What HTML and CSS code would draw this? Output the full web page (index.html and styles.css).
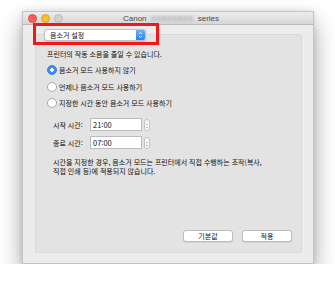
FILE: index.html
```html
<!DOCTYPE html>
<html lang="ko">
<head>
    <meta charset="UTF-8">
    <meta name="viewport" content="width=device-width, initial-scale=1.0">
    <title>Canon series</title>
    <link rel="stylesheet" href="styles.css">
</head>
<body>
    <div class="window">
        <div class="titlebar">
            <div class="lights">
                <span class="light red"></span>
                <span class="light yellow"></span>
                <span class="light gray"></span>
            </div>
            <div class="title">Canon <span class="blur">XXXXXXXX</span> series</div>
        </div>
        <div class="content">
            <div class="popup">
                <span class="popup-text">음소거 설정</span>
                <span class="popup-btn">
                    <svg width="5" height="8" viewBox="0 0 5 8"><path d="M1 3 L2.5 1.5 L4 3 M1 5 L2.5 6.5 L4 5" fill="none" stroke="#fff" stroke-width="0.9"/></svg>
                </span>
            </div>
            <div class="panel">
                <div class="intro">프린터의 작동 소음을 줄일 수 있습니다.</div>
                <div class="radios">
                    <div class="radio-row"><span class="radio on"></span>음소거 모드 사용하지 않기</div>
                    <div class="radio-row"><span class="radio"></span>언제나 음소거 모드 사용하기</div>
                    <div class="radio-row"><span class="radio"></span>지정한 시간 동안 음소거 모드 사용하기</div>
                </div>
                <div class="times">
                    <div class="time-row">
                        <span class="time-label">시작 시간:</span>
                        <span class="field">21:00</span>
                        <span class="stepper"><svg width="6" height="12" viewBox="0 0 6 12"><path d="M1.5 4.5 L3 3 L4.5 4.5 M1.5 7.5 L3 9 L4.5 7.5" fill="none" stroke="#888" stroke-width="0.8"/></svg></span>
                    </div>
                    <div class="time-row">
                        <span class="time-label">종료 시간:</span>
                        <span class="field">07:00</span>
                        <span class="stepper"><svg width="6" height="12" viewBox="0 0 6 12"><path d="M1.5 4.5 L3 3 L4.5 4.5 M1.5 7.5 L3 9 L4.5 7.5" fill="none" stroke="#888" stroke-width="0.8"/></svg></span>
                    </div>
                </div>
                <p class="note">시간을 지정한 경우, 음소거 모드는 프린터에서 직접 수행하는 조작(복사,<br>직접 인쇄 등)에 적용되지 않습니다.</p>
                <div class="buttons">
                    <button class="btn">기본값</button>
                    <button class="btn">적용</button>
                </div>
            </div>
        </div>
        <div class="highlight"></div>
    </div>
</body>
</html>
```

FILE: styles.css
```css
body{
    margin:0;
    padding:0;
    background:#fff;
    font-family:"Noto Sans CJK KR","Liberation Sans",sans-serif;
    color:#111;
}
.window{
    position:relative;
    width:290px;
    height:251px;
    margin:11px 0 0 22px;
    background:#ececec;
    border:1px solid #c4c4c4;
    box-shadow:0 12px 22px rgba(0,0,0,0.35), 0 0 6px rgba(0,0,0,0.12);
}
.titlebar{
    position:relative;
    height:12px;
    background:linear-gradient(#ededed,#d6d6d6);
    border-bottom:1px solid #b9b9b9;
    display:flex;
    align-items:center;
    justify-content:center;
}
.lights{
    position:absolute;
    left:5px;
    top:2px;
    display:flex;
    gap:4px;
}
.light{
    width:7px;
    height:7px;
    border-radius:50%;
}
.red{ background:#fc5f57; border:0.5px solid #de4a42; }
.yellow{ background:#fdbc2e; border:0.5px solid #dea224; }
.gray{ background:#d0d0d0; border:0.5px solid #bdbdbd; }
.title{
    font-family:"Liberation Sans",sans-serif;
    font-size:8px;
    color:#4a4a4a;
    margin-left:6px;
}
.blur{
    color:transparent;
    text-shadow:0 0 3px rgba(90,90,90,0.6);
    margin:0 2px;
}
.content{
    padding:4px 11px 10px 12px;
}
.popup{
    position:relative;
    z-index:1;
    margin-left:9px;
    width:100px;
    height:10px;
    background:#fff;
    border:1px solid #c2c2c2;
    border-radius:3px;
    display:flex;
    align-items:center;
    justify-content:space-between;
    box-shadow:0 0.5px 1px rgba(0,0,0,0.15);
}
.popup-text{
    font-size:7px;
    padding-left:5px;
    line-height:10px;
}
.popup-btn{
    width:9px;
    height:10px;
    background:linear-gradient(#6bb0fb,#2c80f2);
    border-radius:0 2px 2px 0;
    display:flex;
    align-items:center;
    justify-content:center;
}
.panel{
    margin-top:-7px;
    height:207px;
    background:#e3e3e3;
    border:1px solid #d9d9d9;
    border-radius:2px;
    padding:10px 9px 0 11px;
    display:flex;
    flex-direction:column;
}
.intro{
    font-size:7px;
    line-height:10px;
    margin-top:4px;
}
.radios{
    margin-top:6px;
    display:flex;
    flex-direction:column;
    gap:6.5px;
}
.radio-row{
    display:flex;
    align-items:center;
    font-size:7px;
    line-height:10px;
}
.radio{
    box-sizing:border-box;
    width:10px;
    height:10px;
    border-radius:50%;
    background:#fff;
    border:1px solid #a9a9a9;
    margin-right:2px;
}
.radio.on{
    background:radial-gradient(circle,#fff 0 1.6px,#3d8ef5 2px);
    border-color:#2f7fe6;
}
.times{
    margin-top:10px;
    margin-left:6px;
    display:flex;
    flex-direction:column;
    gap:5px;
}
.time-row{
    display:flex;
    align-items:center;
    height:13px;
    font-size:7px;
}
.time-label{
    width:37px;
}
.field{
    box-sizing:border-box;
    width:52px;
    height:13px;
    background:#fff;
    border:1px solid #bcbcbc;
    padding-left:2px;
    line-height:11px;
    font-size:7.5px;
}
.stepper{
    box-sizing:border-box;
    margin-left:2px;
    width:6px;
    height:12px;
    background:#fafafa;
    border:0.5px solid #c2c2c2;
    border-radius:3px;
    display:flex;
    justify-content:center;
}
.note{
    margin:9px 0 0 6px;
    font-size:7px;
    line-height:9px;
}
.buttons{
    margin-top:auto;
    margin-bottom:10px;
    display:flex;
    justify-content:flex-end;
    gap:9px;
}
.btn{
    width:50px;
    height:12px;
    padding:0;
    background:#fff;
    border:1px solid #bdbdbd;
    border-radius:3px;
    font-family:"Noto Sans CJK KR",sans-serif;
    font-size:7px;
    line-height:10px;
    color:#111;
    box-shadow:0 0.5px 0.5px rgba(0,0,0,0.15);
}
.highlight{
    position:absolute;
    left:10px;
    top:11px;
    width:120px;
    height:16px;
    border:3px solid #f01818;
    z-index:2;
}
```
